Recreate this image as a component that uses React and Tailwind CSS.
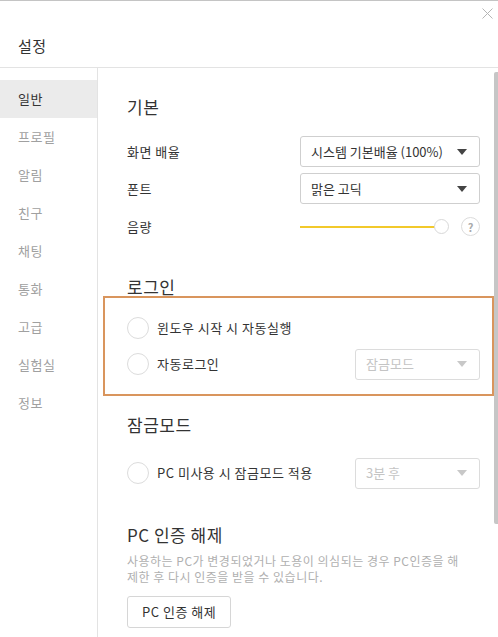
const FONT = { fontFamily: '"Noto Sans CJK KR", "Noto Sans", sans-serif' };

const MENU = ["일반", "프로필", "알림", "친구", "채팅", "통화", "고급", "실험실", "정보"];

function Caret({ muted }) {
  return (
    <svg width="10" height="6" viewBox="0 0 10 6" className="shrink-0">
      <path d="M0 0 L10 0 L5 6 Z" fill={muted ? "#c8c8c8" : "#444"} />
    </svg>
  );
}

function Select({ label, muted, className = "" }) {
  return (
    <div
      className={`h-[31px] rounded-[3px] border flex items-center justify-between pl-[10px] pr-[12px] text-[13px] tracking-normal ${
        muted ? "border-[#dcdcdc] text-[#c4c4c4]" : "border-[#cfcfcf] text-[#333]"
      } ${className}`}
    >
      <span>{label}</span>
      <Caret muted={muted} />
    </div>
  );
}

function Radio() {
  return <span className="w-[22px] h-[22px] rounded-full border border-[#dcdcdc] bg-white shrink-0" />;
}

export default function App() {
  return (
    <div style={FONT} className="w-[498px] h-[637px] bg-white border-t border-[#c4c4c4] overflow-hidden relative text-[#333] tracking-[0.5px]">
      <button className="absolute right-[5px] top-[7px]">
        <svg width="11" height="11" viewBox="0 0 11 11">
          <path d="M0.5 0.5 L10.5 10.5 M10.5 0.5 L0.5 10.5" stroke="#b5b5b5" strokeWidth="1" />
        </svg>
      </button>

      <div className="h-[67px] border-b border-[#e3e3e3] flex items-end pb-[11px] pl-[18px]">
        <h1 className="text-[15px] leading-[20px]">설정</h1>
      </div>

      <div className="flex h-[569px]">
        <nav className="w-[98px] border-r border-[#e3e3e3] pt-[12px] shrink-0">
          {MENU.map((m, i) => (
            <div
              key={m}
              className={`h-[38px] flex items-center pl-[18px] text-[13px] ${
                i === 0 ? "bg-[#ebebeb] text-[#333]" : "text-[#a0a0a0]"
              }`}
            >
              {m}
            </div>
          ))}
        </nav>

        <main className="flex-1 relative">
          <div className="absolute right-0 top-[4px] w-[4px] h-[452px] rounded-l-[2px] bg-[#c6c6c6]" />

          <section className="pl-[29px] pr-[18px] pt-[28px]">
            <h2 className="text-[17px] leading-[22px]">기본</h2>
            <div className="mt-[18px] flex items-center justify-between">
              <span className="text-[13px]">화면 배율</span>
              <Select label="시스템 기본배율 (100%)" className="w-[180px]" />
            </div>
            <div className="mt-[6px] flex items-center justify-between">
              <span className="text-[13px]">폰트</span>
              <Select label="맑은 고딕" className="w-[180px]" />
            </div>
            <div className="mt-[13px] flex items-center justify-between">
              <span className="text-[13px]">음량</span>
              <div className="w-[180px] flex items-center">
                <div className="flex-1 flex items-center">
                  <div className="h-[2px] flex-1 bg-[#f2c92b]" />
                  <span className="w-[15px] h-[15px] rounded-full border border-[#d8d8d8] bg-white -ml-[1px]" />
                </div>
                <span className="ml-[12px] w-[19px] h-[19px] rounded-full border border-[#dcdcdc] text-[#aaa] text-[11px] flex items-center justify-center font-bold tracking-normal">
                  ?
                </span>
              </div>
            </div>
          </section>

          <section className="mt-[41px] pl-[5px] pr-[4px]">
            <h2 className="text-[17px] leading-[18px] pl-[24px]">로그인</h2>
            <div className="border-2 border-[#d9955d] pl-[22px] pr-[12px] pt-[19px] pb-[14px]">
              <div className="flex items-center h-[22px]">
                <Radio />
                <span className="ml-[8px] text-[13px]">윈도우 시작 시 자동실행</span>
              </div>
              <div className="mt-[10px] flex items-center justify-between">
                <div className="flex items-center">
                  <Radio />
                  <span className="ml-[8px] text-[13px]">자동로그인</span>
                </div>
                <Select label="잠금모드" muted className="w-[125px]" />
              </div>
            </div>
          </section>

          <section className="pl-[29px] pr-[18px] mt-[18px]">
            <h2 className="text-[17px] leading-[22px]">잠금모드</h2>
            <div className="mt-[22px] flex items-center justify-between">
              <div className="flex items-center">
                <Radio />
                <span className="ml-[8px] text-[13px]">PC 미사용 시 잠금모드 적용</span>
              </div>
              <Select label="3분 후" muted className="w-[125px]" />
            </div>

            <h2 className="mt-[35px] text-[17px] leading-[22px]">PC 인증 해제</h2>
            <p className="mt-[7px] text-[12px] leading-[16px] text-[#b0b0b0] pr-[12px]">
              사용하는 PC가 변경되었거나 도용이 의심되는 경우 PC인증을 해제한 후 다시 인증을 받을 수 있습니다.
            </p>
            <button className="mt-[11px] h-[32px] px-[14px] rounded-[3px] border border-[#d6d6d6] text-[13px] text-[#333]">
              PC 인증 해제
            </button>
          </section>
        </main>
      </div>
    </div>
  );
}
